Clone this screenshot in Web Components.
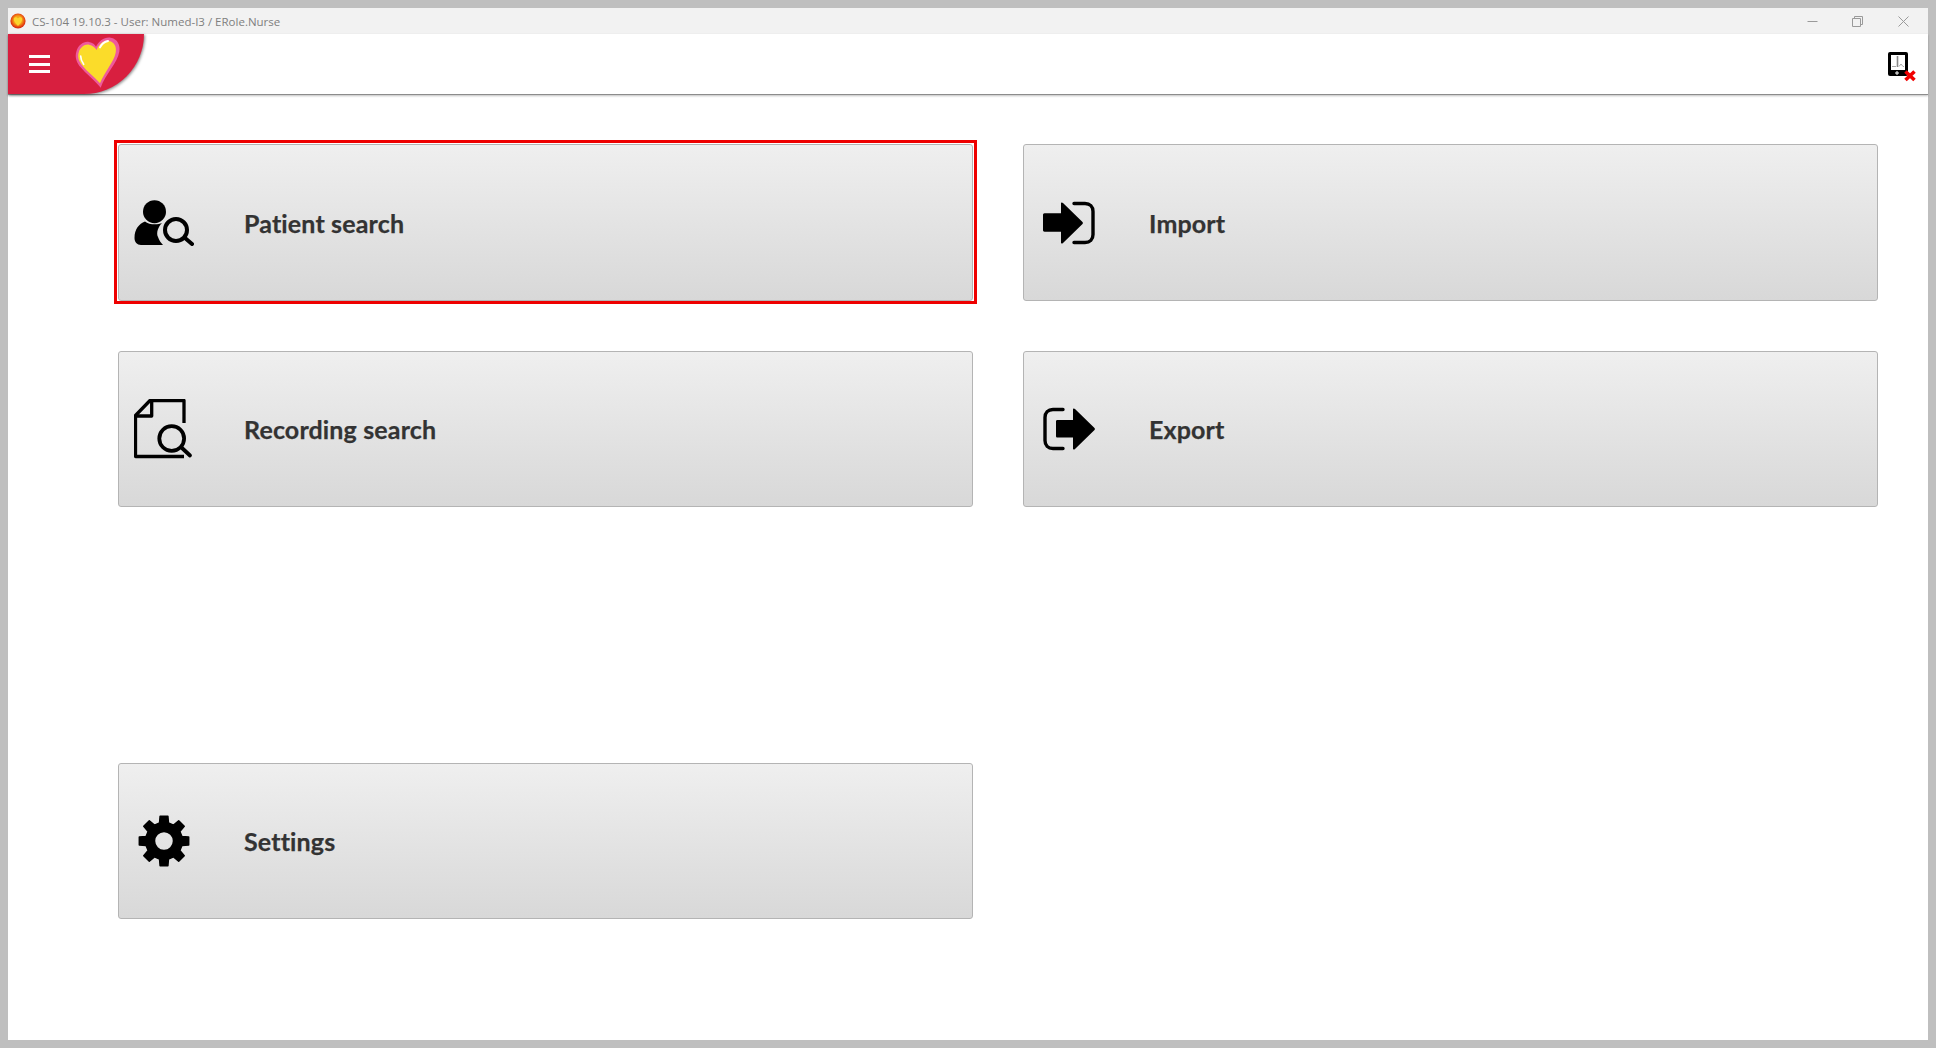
<!DOCTYPE html>
<html>
<head>
<meta charset="utf-8">
<title>CS-104</title>
<style>
html, body { margin: 0; height: 100%; }
body { background: #bfbfbf; padding: 8px; box-sizing: border-box; height: 1048px; overflow: hidden; }
</style>
</head>
<body>
<app-window>
  <title-bar>CS-104 19.10.3 - User: Numed-I3 / ERole.Nurse</title-bar>
  <app-header></app-header>
  <menu-grid>
    <menu-button icon="patient" focused style="grid-area: 1 / 1">Patient search</menu-button>
    <menu-button icon="import" style="grid-area: 1 / 2">Import</menu-button>
    <menu-button icon="recording" style="grid-area: 2 / 1">Recording search</menu-button>
    <menu-button icon="export" style="grid-area: 2 / 2">Export</menu-button>
    <menu-button icon="settings" style="grid-area: 4 / 1">Settings</menu-button>
  </menu-grid>
</app-window>
<script>
class AppWindow extends HTMLElement {
  constructor() {
    super()
    this.attachShadow({ mode: 'open' })
    this.shadowRoot.innerHTML = `
<style>
:host { display: flex; flex-direction: column; height: 1032px; background: #fff; }
</style>
<slot></slot>`
  }
}

class TitleBar extends HTMLElement {
  constructor() {
    super()
    this.attachShadow({ mode: 'open' })
    this.shadowRoot.innerHTML = `
<style>
:host { display: flex; align-items: center; height: 26px; background: #f2f2f2; flex: none; padding-right: 2px; }
.app-icon { width: 16px; height: 16px; margin-left: 2px; margin-right: 6px; flex: none; }
.caption { font: 11.5px "Open Sans", sans-serif; color: #7f7f7f; flex: 1; white-space: nowrap; }
.ctl { width: 45.5px; height: 26px; flex: none; display: flex; align-items: center; justify-content: center; }
.ctl svg { width: 11px; height: 11px; }
</style>
<svg class="app-icon" viewBox="0 0 16 16">
  <defs><radialGradient id="ball" cx=".5" cy=".45" r=".6"><stop offset=".45" stop-color="#f6a01a"/><stop offset=".8" stop-color="#e2330f"/><stop offset="1" stop-color="#a83a28"/></radialGradient></defs>
  <circle cx="8" cy="8" r="7.6" fill="url(#ball)"/>
  <path d="M8 13 C6 10.5 3.6 8.6 3.8 6 C4 3.8 7 3.4 8 5.6 C9 3.4 12 3.8 12.2 6 C12.4 8.6 10 10.5 8 13 Z" fill="#fbd52c"/>
</svg>
<span class="caption"><slot></slot></span>
<div class="ctl"><svg viewBox="0 0 11 11"><path d="M.5 5.5 H10.5" stroke="#9a9a9a" fill="none"/></svg></div>
<div class="ctl"><svg viewBox="0 0 11 11"><path d="M.5 2.5 H8.5 V10.5 H.5 Z M2.5 2.5 V.5 H10.5 V8.5 H8.5" stroke="#9a9a9a" fill="none"/></svg></div>
<div class="ctl"><svg viewBox="0 0 11 11"><path d="M.5 .5 L10.5 10.5 M10.5 .5 L.5 10.5" stroke="#9a9a9a" fill="none"/></svg></div>`
  }
}

class AppHeader extends HTMLElement {
  constructor() {
    super()
    this.attachShadow({ mode: 'open' })
    this.shadowRoot.innerHTML = `
<style>
:host { display: flex; justify-content: space-between; align-items: flex-start; height: 60px; flex: none; background: #fff; border-bottom: 1px solid #8c8c8c; box-shadow: 0 1px 2px rgba(0,0,0,.25); }
.brand { width: 136px; height: 60px; background: #d81f3f; border-bottom-right-radius: 60px; box-shadow: 1px 1px 3px rgba(0,0,0,.45); display: flex; align-items: flex-start; }
.burger { width: 21px; height: 18px; margin: 21px 0 0 21px; display: flex; flex-direction: column; justify-content: space-between; }
.burger i { display: block; height: 3px; background: #fff; }
.heart { width: 48px; height: 54px; margin: .5px 0 0 23.5px; overflow: visible; flex: none; }
.device { width: 30px; height: 32px; margin: 17px 11px 0 0; }
</style>
<div class="brand">
  <div class="burger"><i></i><i></i><i></i></div>
  <svg class="heart" viewBox="40 15 144 162">
    <path d="M120 173 C100 150 75 130 60 112 C48 98 42 82 47 65 C52 45 70 33 85 36 C96 38 103 44 106 50 C115 32 132 20 150 23 C170 26 180 45 176 65 C170 100 135 130 120 173 Z" fill="#ee5a9c"/>
    <path d="M118 160 C100 140 80 125 66 108 C54 94 50 80 54 68 C58 52 72 42 85 44 C96 46 103 52 108 60 C114 42 130 30 146 33 C160 36 169 50 165 68 C160 95 132 125 118 160 Z" fill="#fbdc2a"/>
    <path d="M118 52 C123 42 132 35 142 33" fill="none" stroke="#fff" stroke-width="6" stroke-linecap="round"/>
    <path d="M60 78 C60 88 64 96 69 103" fill="none" stroke="#fff" stroke-width="5" stroke-linecap="round"/>
  </svg>
</div>
<svg class="device" viewBox="0 0 30 32">
  <rect x="1" y="1" width="20" height="24" rx="2" fill="#000"/>
  <rect x="4" y="4" width="14" height="15" fill="#fff"/>
  <path d="M10.5 5 V16" stroke="#888" stroke-width="1.6"/>
  <path d="M5 15.5 H9 M12 15.5 L14 13 L16 15.5 H17" fill="none" stroke="#aaa"/>
  <path d="M8 22 H12 M10 20 V24" stroke="#fff"/>
  <path d="M18.5 20.5 L27.5 29 M27.5 20.5 L18.5 29" stroke="#f00000" stroke-width="3.6"/>
</svg>`
  }
}

class MenuGrid extends HTMLElement {
  constructor() {
    super()
    this.attachShadow({ mode: 'open' })
    this.shadowRoot.innerHTML = `
<style>
:host { display: grid; grid-template-columns: 855px 855px; grid-template-rows: 157px 156px 156px 156px; column-gap: 50px; row-gap: 50px; padding: 49px 0 0 110px; }
</style>
<slot></slot>`
  }
}

function gearPath(cx, cy, teeth, outer, root, hole) {
  const pts = []
  const step = Math.PI * 2 / teeth
  for (let i = 0; i < teeth; i++) {
    const a = -Math.PI / 2 + i * step
    const tip = step * 0.2, base = step * 0.31
    ;[[a - base, root], [a - tip, outer], [a + tip, outer], [a + base, root]].forEach(([t, r]) => {
      pts.push((cx + r * Math.cos(t)).toFixed(2) + ' ' + (cy + r * Math.sin(t)).toFixed(2))
    })
  }
  return 'M' + pts.join(' L') + ` Z M${cx - hole} ${cy} a${hole} ${hole} 0 1 0 ${hole * 2} 0 a${hole} ${hole} 0 1 0 ${-hole * 2} 0 Z`
}

const ICONS = {
  patient: `<svg width="60" height="46" viewBox="0 0 60 46">
    <circle cx="20.5" cy="11.7" r="11.5"/>
    <path d="M.5 38 C.5 29 5 24 11 21.5 C15 25 24 25 28 23 C24 27 22 33 24 37 C25 40 27 43 29 45 H7 C3 45 .5 42 .5 38 Z"/>
    <circle cx="42" cy="30" r="11" fill="none" stroke="#000" stroke-width="4"/>
    <path d="M51 38 L58 44" stroke="#000" stroke-width="4" stroke-linecap="round"/>
  </svg>`,
  recording: `<svg width="60" height="60" viewBox="0 0 60 60">
    <path d="M50 24 V1.5 H16 L1.5 16.5 V57.5 H50" fill="none" stroke="#000" stroke-width="3.3" stroke-linejoin="round"/>
    <path d="M17.7 3 V17 H1.5" fill="none" stroke="#000" stroke-width="3.3" stroke-linejoin="round"/>
    <circle cx="37.7" cy="39.5" r="12.4" fill="none" stroke="#000" stroke-width="3.8"/>
    <path d="M48 49 L56 56.5" stroke="#000" stroke-width="3.8" stroke-linecap="round"/>
  </svg>`,
  import: `<svg width="60" height="46" viewBox="0 0 60 46">
    <path d="M22 3.5 C22 2.5 23 2 24 3 L43.5 22 C44 22.6 44 23.4 43.5 24 L24 43 C23 44 22 43.5 22 42.5 V31.7 H5.5 C4.5 31.7 4 31 4 30 V15 C4 14 4.5 13.3 5.5 13.3 H22 Z"/>
    <path d="M35 3.5 H46 C51 3.5 54 6.5 54 11.5 V34.5 C54 39.5 51 42.5 46 42.5 H35" fill="none" stroke="#000" stroke-width="3.4" stroke-linecap="round"/>
  </svg>`,
  export: `<svg width="60" height="46" viewBox="0 0 60 46">
    <path d="M24 3.5 H14 C9 3.5 6 6.5 6 11.5 V34.5 C6 39.5 9 42.5 14 42.5 H24" fill="none" stroke="#000" stroke-width="3.4" stroke-linecap="round"/>
    <path d="M34 3.5 C34 2.5 35 2 36 3 L55.5 22 C56 22.6 56 23.4 55.5 24 L36 43 C35 44 34 43.5 34 42.5 V31.5 H18.5 C17.5 31.5 17 31 17 30 V15.5 C17 14.5 17.5 14 18.5 14 H34 Z"/>
  </svg>`,
  settings: `<svg width="60" height="52" viewBox="0 0 60 52">
    <path fill-rule="evenodd" stroke="#000" stroke-width="1.5" stroke-linejoin="round" d="${gearPath(30, 26, 8, 25, 18.5, 9.5)}"/>
  </svg>`
}

class MenuButton extends HTMLElement {
  constructor() {
    super()
    this.attachShadow({ mode: 'open' })
  }

  connectedCallback() {
    const template = this.ownerDocument.createElement('template')
    template.innerHTML = `
<style>
:host { display: block; }
.btn { box-sizing: border-box; height: 100%; position: relative; display: flex; align-items: center; border: 1px solid #b4b4b4; border-radius: 3px; background: linear-gradient(#efefef, #d8d8d8); color: #333; font: bold 25px Lato, sans-serif; letter-spacing: .15px; -webkit-text-stroke: .25px #333; }
:host([focused]) .btn::after { content: ""; position: absolute; inset: -5px -5px -4px -5px; border: 3px solid #ee0000; }
.icon { width: 60px; margin-left: 15px; margin-right: 50px; display: flex; flex: none; }
</style>
<div class="btn">
  <span class="icon">${ICONS[this.getAttribute('icon')]}</span>
  <span><slot></slot></span>
</div>`
    this.shadowRoot.appendChild(template.content.cloneNode(true))
  }
}

customElements.define('app-window', AppWindow)
customElements.define('title-bar', TitleBar)
customElements.define('app-header', AppHeader)
customElements.define('menu-grid', MenuGrid)
customElements.define('menu-button', MenuButton)
</script>
</body>
</html>
